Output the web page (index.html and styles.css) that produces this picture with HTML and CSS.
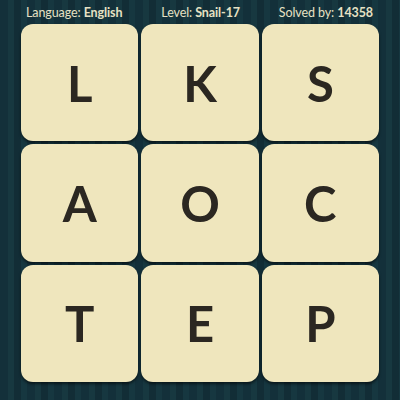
FILE: index.html
```html
<!DOCTYPE html>
<html>
<head>
<meta charset="utf-8">
<link rel="stylesheet" href="styles.css">
</head>
<body>
<div class="page">
  <div class="header">
    <span class="item">Language: <b>English</b></span>
    <span class="item">Level: <b>Snail-17</b></span>
    <span class="item">Solved by: <b>14358</b></span>
  </div>
  <div class="grid">
    <div class="tile">L</div>
    <div class="tile">K</div>
    <div class="tile">S</div>
    <div class="tile">A</div>
    <div class="tile">O</div>
    <div class="tile">C</div>
    <div class="tile">T</div>
    <div class="tile">E</div>
    <div class="tile">P</div>
  </div>
</div>
</body>
</html>
```
FILE: styles.css
```css
html, body {
  margin: 0;
  padding: 0;
}
body {
  width: 400px;
  height: 400px;
  overflow: hidden;
  background-color: #15323b;
  background-image: repeating-linear-gradient(90deg,
    #13303a 0px, #13303a 8px,
    #173840 8px, #173840 14px,
    #122d36 14px, #122d36 21px,
    #163740 21px, #163740 27px);
  font-family: Lato, "Open Sans", sans-serif;
}
.page {
  width: 400px;
  height: 400px;
  display: flex;
  flex-direction: column;
}
.header {
  height: 24px;
  display: flex;
  justify-content: space-between;
  align-items: center;
  padding: 0 27px 0 26px;
  color: #e6e1c4;
  font-size: 12.5px;
  letter-spacing: -0.1px;
  box-sizing: border-box;
}
.header b {
  font-weight: 700;
}
.grid {
  margin-left: 21px;
  width: 358px;
  height: 358px;
  display: grid;
  grid-template-columns: repeat(3, 1fr);
  grid-template-rows: repeat(3, 1fr);
  gap: 3px;
}
.tile {
  background: #efe6bd;
  border-radius: 12px;
  box-shadow: 0 2px 3px rgba(0, 0, 0, 0.55);
  display: flex;
  align-items: center;
  justify-content: center;
  font-size: 49px;
  font-weight: 700;
  color: #2b2721;
}
```
